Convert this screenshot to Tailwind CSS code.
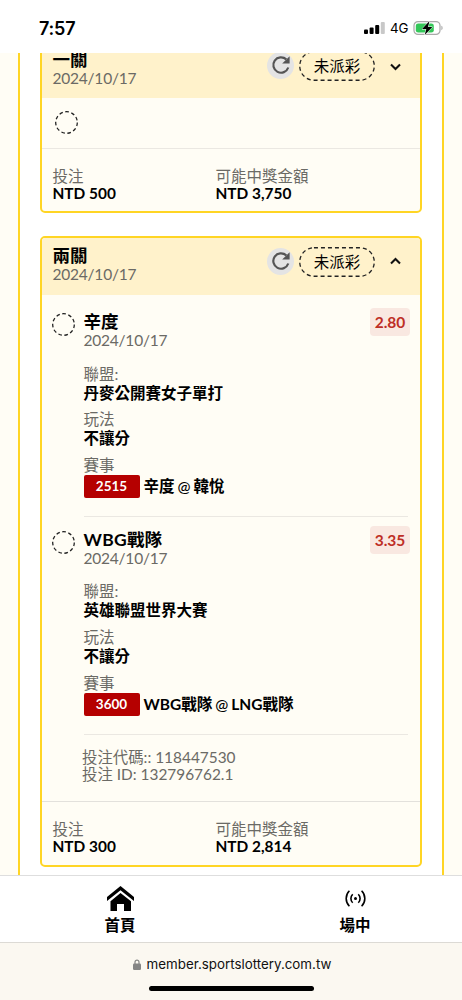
<!DOCTYPE html>
<html lang="zh-Hant">
  <head>
    <meta charset="UTF-8" />
    <meta name="viewport" content="width=device-width, initial-scale=1.0" />
    <title>投注紀錄</title>
    <script src="https://cdn.jsdelivr.net/npm/@tailwindcss/browser@4"></script>
  </head>
  <body
    class="flex h-[1000px] w-[462px] flex-col overflow-hidden bg-white font-['Lato','Noto_Sans_CJK_TC',sans-serif] text-[15.5px] leading-[19px] whitespace-nowrap text-black"
  >
    <!-- Status bar -->
    <header class="flex h-[53px] shrink-0 items-center justify-between pt-[3px] pr-[18px] pl-[39px] font-['Inter',sans-serif]">
      <span class="text-[18px] font-semibold tracking-[-0.2px]">7:57</span>
      <div class="flex items-center">
        <svg class="h-3 w-[21px]" viewBox="0 0 21 12">
          <rect x="0" y="7.5" width="4" height="4.5" rx="1" />
          <rect x="5.6" y="5.5" width="4" height="6.5" rx="1" />
          <rect x="11.2" y="3" width="4" height="9" rx="1" />
          <rect x="16.8" y="0" width="4" height="12" rx="1" fill="#c8c8c8" />
        </svg>
        <span class="ml-[5px] w-[20px] text-[13.3px] tracking-[-0.2px]">4G</span>
        <svg class="ml-[3px] h-4 w-[31px]" viewBox="0 0 31 16">
          <rect x="1" y="1.6" width="26" height="12.8" rx="4" fill="#fff" stroke="#a9a9a9" stroke-width="1.2" />
          <rect x="2.8" y="3.4" width="18" height="9.2" rx="2.4" fill="#34c759" />
          <path d="M28.4 5.8c1.6.6 1.6 3.8 0 4.4z" fill="#a9a9a9" />
          <path d="M16.5 1 9 9h4.3L11.7 15 19.3 7H15z" fill="#000" stroke="#fff" stroke-width="1" paint-order="stroke" />
        </svg>
      </div>
    </header>

    <!-- Bet list -->
    <main class="h-[822px] shrink-0 overflow-hidden bg-[#fffdf5] pr-[18px] pl-[18px]">
      <div class="flex h-full flex-col gap-[23px] border-x-2 border-[#ffd524] bg-white px-[20px]">
        <!-- Single -->
        <section class="-mt-[13px] h-[173px] shrink-0 overflow-hidden rounded-[5px] border-[2.5px] border-[#ffd524] bg-[#fffdf5]">
          <div class="flex h-[56px] justify-between bg-[#fff2cb] pt-[9px] pr-[19px] pl-[10.5px]">
            <div class="leading-[18px]">
              <h2 class="text-[17.5px] font-bold">一關</h2>
              <p class="tracking-[-0.22px] text-[#6b6a65]">2024/10/17</p>
            </div>
            <div class="flex h-[30px] items-center">
              <span class="-mt-[2px] flex size-[27px] items-center justify-center rounded-full bg-[#e4e4e4]">
                <svg class="size-[20px]" viewBox="0 0 20 20" fill="none">
                  <path d="M15.3 4.4A7.7 7.7 0 1 0 17.3 12.5" stroke="#555" stroke-width="2.2" />
                  <path d="M18.6 1.2v7.4h-7.4z" fill="#555" />
                </svg>
              </span>
              <span class="relative ml-[5px]">
                <svg class="absolute h-[30px] w-[76px]" viewBox="0 0 76 30" fill="none">
                  <rect x=".75" y=".75" width="74.5" height="28.5" rx="14.2" stroke="#222" stroke-width="1.3" stroke-dasharray="4 3" />
                </svg>
                <span class="flex h-[30px] w-[76px] items-center justify-center">未派彩</span>
              </span>
              <svg class="mt-[2px] ml-[15px] h-[8px] w-[11px]" viewBox="0 0 11 8" fill="none">
                <path d="M1 1.6 5.5 6 10 1.6" stroke="#111" stroke-width="2.1" />
              </svg>
            </div>
          </div>
          <div class="h-[51px] border-b-[1.5px] border-[#ebe8e2] pt-[13px] pl-[13px]">
            <svg class="size-[23px]" viewBox="0 0 23 23" fill="none">
              <circle cx="11.5" cy="11.5" r="10.8" stroke="#222" stroke-width="1.3" stroke-dasharray="3.6 2.57" />
            </svg>
          </div>
          <div class="flex pt-[19px] pl-[10.5px] leading-[17px]">
            <div class="w-[163px]">
              <p class="text-[#6b6a65]">投注</p>
              <p class="text-[15.4px] font-bold">NTD 500</p>
            </div>
            <div>
              <p class="text-[#6b6a65]">可能中獎金額</p>
              <p class="text-[15.4px] font-bold">NTD 3,750</p>
            </div>
          </div>
        </section>

        <!-- Double -->
        <section class="h-[631px] shrink-0 overflow-hidden rounded-[5px] border-[2.5px] border-[#ffd524] bg-[#fffdf5]">
          <div class="flex h-[57px] justify-between bg-[#fff2cb] pt-[9px] pr-[19px] pl-[10.5px]">
            <div class="leading-[18px]">
              <h2 class="text-[17.5px] font-bold">兩關</h2>
              <p class="tracking-[-0.22px] text-[#6b6a65]">2024/10/17</p>
            </div>
            <div class="flex h-[30px] items-center">
              <span class="-mt-[2px] flex size-[27px] items-center justify-center rounded-full bg-[#e4e4e4]">
                <svg class="size-[20px]" viewBox="0 0 20 20" fill="none">
                  <path d="M15.3 4.4A7.7 7.7 0 1 0 17.3 12.5" stroke="#555" stroke-width="2.2" />
                  <path d="M18.6 1.2v7.4h-7.4z" fill="#555" />
                </svg>
              </span>
              <span class="relative ml-[5px]">
                <svg class="absolute h-[30px] w-[76px]" viewBox="0 0 76 30" fill="none">
                  <rect x=".75" y=".75" width="74.5" height="28.5" rx="14.2" stroke="#222" stroke-width="1.3" stroke-dasharray="4 3" />
                </svg>
                <span class="flex h-[30px] w-[76px] items-center justify-center">未派彩</span>
              </span>
              <svg class="-mt-[2px] ml-[15px] h-[8px] w-[11px]" viewBox="0 0 11 8" fill="none">
                <path d="M1 6.4 5.5 2 10 6.4" stroke="#111" stroke-width="2.1" />
              </svg>
            </div>
          </div>

          <div class="pt-[4px] pr-[10px] pl-[10px]">
            <article class="flex h-[218px] pt-[14px]">
              <svg class="size-[23px] shrink-0" viewBox="0 0 23 23" fill="none">
                <circle cx="11.5" cy="11.5" r="10.8" stroke="#222" stroke-width="1.3" stroke-dasharray="3.6 2.57" />
              </svg>
              <div class="mr-[2px] ml-[8.5px] flex-1 border-b-[1.5px] border-[#ebe8e2]">
                <div class="-mr-[2px] flex h-[36px] justify-between leading-[18px]">
                  <div>
                    <h3 class="text-[17.5px] font-bold">辛度</h3>
                    <p class="tracking-[-0.22px] text-[#6b6a65]">2024/10/17</p>
                  </div>
                  <span class="-mt-[5px] flex h-[28px] w-[40px] items-center justify-center rounded-[4px] bg-[#f9e8e1] font-bold text-[#be2e25]">2.80</span>
                </div>
                <p class="mt-[15.5px] text-[#6b6a65]">聯盟:</p>
                <p class="font-bold">丹麥公開賽女子單打</p>
                <p class="mt-[7.5px] text-[#6b6a65]">玩法</p>
                <p class="font-bold">不讓分</p>
                <p class="mt-[8px] text-[#6b6a65]">賽事</p>
                <div class="flex items-center gap-[4px] font-bold">
                  <span class="flex h-[22.5px] w-[56px] items-center justify-center rounded-[2px] bg-[#b50000] text-[13.5px] text-white">2515</span>
                  <span class="[word-spacing:-0.8px]">辛度 <span class="font-medium">@</span> 韓悅</span>
                </div>
              </div>
            </article>

            <article class="flex h-[218px] pt-[14px]">
              <svg class="size-[23px] shrink-0" viewBox="0 0 23 23" fill="none">
                <circle cx="11.5" cy="11.5" r="10.8" stroke="#222" stroke-width="1.3" stroke-dasharray="3.6 2.57" />
              </svg>
              <div class="mr-[2px] ml-[8.5px] flex-1 border-b-[1.5px] border-[#ebe8e2]">
                <div class="-mr-[2px] flex h-[36px] justify-between leading-[18px]">
                  <div>
                    <h3 class="text-[17.5px] font-bold"><span class="tracking-[0.3px]">WBG</span>戰隊</h3>
                    <p class="tracking-[-0.22px] text-[#6b6a65]">2024/10/17</p>
                  </div>
                  <span class="-mt-[5px] flex h-[28px] w-[40px] items-center justify-center rounded-[4px] bg-[#f9e8e1] font-bold text-[#be2e25]">3.35</span>
                </div>
                <p class="mt-[15px] text-[#6b6a65]">聯盟:</p>
                <p class="font-bold">英雄聯盟世界大賽</p>
                <p class="mt-[8px] text-[#6b6a65]">玩法</p>
                <p class="font-bold">不讓分</p>
                <p class="mt-[8px] text-[#6b6a65]">賽事</p>
                <div class="flex items-center gap-[4px] font-bold">
                  <span class="flex h-[22.5px] w-[56px] items-center justify-center rounded-[2px] bg-[#b50000] text-[13.5px] text-white">3600</span>
                  <span class="[word-spacing:-0.8px]">WBG戰隊 <span class="font-medium">@</span> LNG戰隊</span>
                </div>
              </div>
            </article>
          </div>

          <div class="h-[67px] border-b border-[#e3e1dc] pt-[14px] pl-[40px] text-[15.4px] leading-[17px] text-[#6b6a65]">
            <p>投注代碼:: 118447530</p>
            <p>投注 ID: 132796762.1</p>
          </div>
          <div class="flex pt-[19px] pl-[10.5px] leading-[17px]">
            <div class="w-[163px]">
              <p class="text-[#6b6a65]">投注</p>
              <p class="text-[15.4px] font-bold">NTD 300</p>
            </div>
            <div>
              <p class="text-[#6b6a65]">可能中獎金額</p>
              <p class="text-[15.4px] font-bold">NTD 2,814</p>
            </div>
          </div>
        </section>
      </div>
    </main>

    <!-- Bottom navigation -->
    <nav class="flex h-[67px] shrink-0 border-t border-[#dedede] bg-white pl-[2px] font-bold">
      <a class="flex w-[236px] shrink-0 flex-col items-center pt-[10px]">
        <svg class="h-[25px] w-[27px]" viewBox="0 0 27 25">
          <path d="M13.5 0 27 11v4L13.5 4.2 0 15v-4z" />
          <path d="M13.5 7 24 15.2V25h-7v-7h-7v7H3.5v-9.8z" />
        </svg>
        <span class="mt-[5px]">首頁</span>
      </a>
      <a class="flex w-[234px] shrink-0 flex-col items-center pt-[14px]">
        <svg class="h-[17px] w-[21px]" viewBox="0 0 21 17" fill="none" stroke="#000" stroke-width="1.6">
          <path d="M4.4.8C.1 5 .1 12 4.4 16.2M16.6.8c4.3 4.2 4.3 11.2 0 15.4M7.7 4.2c-2.4 2.4-2.4 6.2 0 8.6M13.3 4.2c2.4 2.4 2.4 6.2 0 8.6" />
          <circle cx="10.5" cy="8.5" r="1.5" fill="#000" stroke="none" />
        </svg>
        <span class="mt-[9px]">場中</span>
      </a>
    </nav>

    <!-- Browser address bar -->
    <footer class="flex h-[58px] shrink-0 flex-col items-center border-t border-[#dcdad5] bg-[#fbf8f1] pt-[12px] font-['Inter',sans-serif]">
      <div class="flex items-center gap-[6px] pl-[2px] text-[13.35px] text-[#111]">
        <svg class="h-[11px] w-[8px]" viewBox="0 0 8 11">
          <path d="M2 5V3.2a2 2 0 0 1 4 0V5" fill="none" stroke="#858585" stroke-width="1.2" />
          <rect y="4.6" width="8" height="6.4" rx="1.2" fill="#858585" />
        </svg>
        <span>member.sportslottery.com.tw</span>
      </div>
      <div class="mt-[12px] h-[5px] w-[165px] rounded-full bg-black"></div>
    </footer>
  </body>
</html>
